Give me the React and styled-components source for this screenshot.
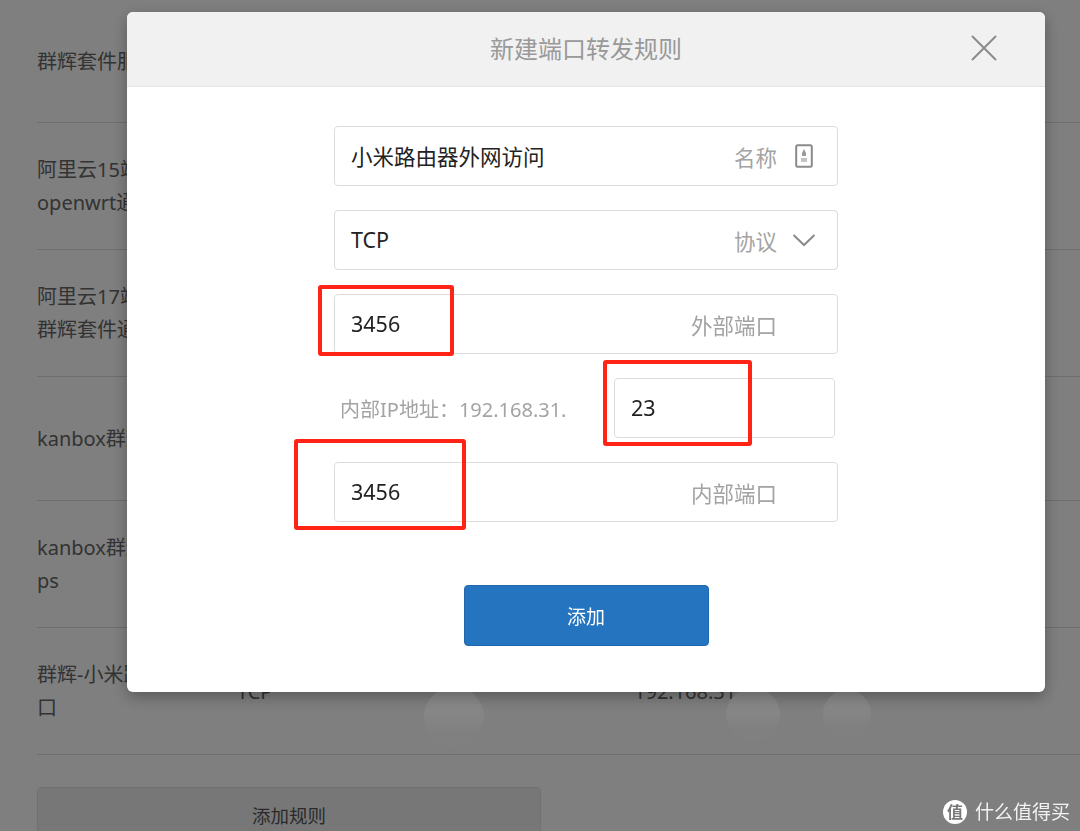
import React from "react";
import styled, { createGlobalStyle } from "styled-components";

const GlobalStyle = createGlobalStyle`
  html, body {
    margin: 0;
    height: 100%;
    overflow: hidden;
    background: #fff;
    font-family: "Noto Sans", "Noto Sans CJK SC", sans-serif;
  }
`;

const rules = [
  { height: 123, lines: ["群辉套件服务外网访问"] },
  { height: 127, lines: ["阿里云15端口转发", "openwrt通道"] },
  { height: 127, lines: ["阿里云17端口转发", "群辉套件通道"] },
  { height: 124, lines: ["kanbox群辉访问"] },
  { height: 127, lines: ["kanbox群辉访问", "ps"] },
  {
    height: 127,
    lines: ["群辉-小米路由器端", "口"],
    protocol: "TCP",
    ip: "192.168.31.98",
    port: "98",
  },
];

const App = () => (
  <>
    <GlobalStyle />
    <Page>
      {rules.map((rule) => (
        <RuleRow key={rule.lines[0] + rule.height + rule.lines.length} $height={rule.height}>
          <RuleName>
            {rule.lines.map((line) => (
              <div key={line}>{line}</div>
            ))}
          </RuleName>
          <RuleCell>{rule.protocol}</RuleCell>
          <RuleCell />
          <RuleCell>{rule.ip}</RuleCell>
        </RuleRow>
      ))}
      <AddRuleButton>添加规则</AddRuleButton>
    </Page>

    <Backdrop>
      <Dome $left={424} $top={687} $width={60} />
      <Dome $left={726} $top={688} $width={54} />
      <Dome $left={823} $top={690} $width={48} />

      <Modal>
        <ModalHeader>
          <ModalTitle>新建端口转发规则</ModalTitle>
          <CloseButton aria-label="关闭">
            <svg width="28" height="28" viewBox="0 0 28 28">
              <path d="M2 2 L26 26 M26 2 L2 26" stroke="#8a8a8a" strokeWidth="2" fill="none" />
            </svg>
          </CloseButton>
        </ModalHeader>

        <ModalBody>
          <Field>
            <FieldValue>小米路由器外网访问</FieldValue>
            <FieldLabel>名称</FieldLabel>
            <IconSlot>
              <svg width="18" height="24" viewBox="0 0 18 24">
                <rect x="1.2" y="1.2" width="15.6" height="21.6" rx="1.5" fill="#fff" stroke="#8a8a8a" strokeWidth="2" />
                <path d="M9 5 L11 9 L11 12 L7 12 L7 9 Z" fill="#9a9a9a" />
                <rect x="6" y="14" width="6" height="4" fill="#c4c4c4" />
              </svg>
            </IconSlot>
          </Field>

          <Field>
            <FieldValue>TCP</FieldValue>
            <FieldLabel>协议</FieldLabel>
            <IconSlot>
              <svg width="24" height="14" viewBox="0 0 24 14">
                <path d="M1.5 2 L12 12 L22.5 2" stroke="#8a8a8a" strokeWidth="2" fill="none" />
              </svg>
            </IconSlot>
          </Field>

          <Field>
            <FieldValue>3456</FieldValue>
            <FieldLabel $wide>外部端口</FieldLabel>
          </Field>

          <IpRow>
            <IpPrefix>内部IP地址：192.168.31.</IpPrefix>
            <IpField>
              <FieldValue>23</FieldValue>
            </IpField>
          </IpRow>

          <Field>
            <FieldValue>3456</FieldValue>
            <FieldLabel $wide>内部端口</FieldLabel>
          </Field>

          <SubmitButton>添加</SubmitButton>
        </ModalBody>

        <Mark $left={191} $top={273} $width={136} $height={71} />
        <Mark $left={476} $top={348} $width={149} $height={86} />
        <Mark $left={167} $top={427} $width={172} $height={91} />
      </Modal>

      <Watermark>
        <WatermarkBadge>值</WatermarkBadge>
        什么值得买
      </Watermark>
    </Backdrop>
  </>
);

const Page = styled.div`
  height: 831px;
  padding: 0 0 0 37px;
  box-sizing: border-box;
  overflow: hidden;
  color: #666;
  font-size: 20px;
  line-height: 33px;
`;

const RuleRow = styled.div`
  display: grid;
  grid-template-columns: 200px 197px 200px 1fr;
  align-items: center;
  box-sizing: border-box;
  height: ${({ $height }) => $height}px;
  border-bottom: 1px solid #ddd;
`;

const RuleName = styled.div`
  white-space: nowrap;
  overflow: hidden;
`;

const RuleCell = styled.div`
  white-space: nowrap;
`;

const AddRuleButton = styled.button`
  display: block;
  width: 504px;
  height: 60px;
  margin-top: 32px;
  padding: 0 0 4px;
  background: #efefef;
  border: 1px solid #e2e2e2;
  border-radius: 4px;
  color: #555;
  font: inherit;
  font-size: 18.5px;
`;

const Backdrop = styled.div`
  position: fixed;
  inset: 0;
  background: rgba(0, 0, 0, 0.5);
  padding: 12px 35px 0 127px;
  overflow: hidden;
`;

const Dome = styled.div`
  position: absolute;
  left: ${({ $left }) => $left}px;
  top: ${({ $top }) => $top}px;
  width: ${({ $width }) => $width}px;
  height: ${({ $width }) => $width}px;
  border-radius: 50%;
  background: linear-gradient(#8f8f8f 0%, #888 35%, #808080 75%);
`;

const Modal = styled.div`
  position: relative;
  width: 918px;
  height: 680px;
  background: #fff;
  border-radius: 6px;
  box-shadow: 0 5px 15px rgba(0, 0, 0, 0.3);
`;

const ModalHeader = styled.div`
  position: relative;
  display: flex;
  align-items: center;
  justify-content: center;
  box-sizing: border-box;
  height: 75px;
  background: #f1f1f1;
  border-bottom: 1px solid #e4e4e4;
  border-radius: 6px 6px 0 0;
`;

const ModalTitle = styled.div`
  color: #999;
  font-size: 24px;
  line-height: 1;
  margin-bottom: 0;
`;

const CloseButton = styled.button`
  position: absolute;
  right: 47px;
  top: 22px;
  display: flex;
  padding: 0;
  border: 0;
  background: none;
`;

const ModalBody = styled.div`
  display: flex;
  flex-direction: column;
  align-items: center;
  gap: 24px;
  padding-top: 39px;
`;

const Field = styled.div`
  display: flex;
  align-items: center;
  box-sizing: border-box;
  width: 504px;
  height: 60px;
  padding: 0 21px 0 16px;
  background: #fff;
  border: 1px solid #dcdcdc;
  border-radius: 4px;
`;

const FieldValue = styled.div`
  flex: 1;
  color: #222;
  font-size: 21.5px;
  padding-bottom: 2px;
`;

const FieldLabel = styled.div`
  color: #a3a3a3;
  font-size: 21.5px;
  margin-right: ${({ $wide }) => ($wide ? "39px" : "0")};
`;

const IconSlot = styled.div`
  display: flex;
  justify-content: center;
  width: 24px;
  margin-left: 15px;
`;

const IpRow = styled.div`
  display: flex;
  align-items: center;
  box-sizing: border-box;
  width: 504px;
  height: 60px;
  padding: 0 3px 0 6px;
`;

const IpPrefix = styled.div`
  flex: 1;
  color: #a3a3a3;
  font-size: 20px;
  white-space: nowrap;
`;

const IpField = styled(Field)`
  width: 221px;
`;

const SubmitButton = styled.button`
  width: 245px;
  height: 61px;
  margin-top: 39px;
  background: #2474c0;
  border: 1px solid #2067ab;
  border-radius: 4px;
  color: #fff;
  font: inherit;
  font-size: 19px;
`;

const Mark = styled.div`
  position: absolute;
  left: ${({ $left }) => $left}px;
  top: ${({ $top }) => $top}px;
  width: ${({ $width }) => $width}px;
  height: ${({ $height }) => $height}px;
  box-sizing: border-box;
  border: 4px solid #ff2415;
  border-radius: 3px;
`;

const Watermark = styled.div`
  position: absolute;
  right: 10px;
  bottom: 7px;
  display: flex;
  align-items: center;
  gap: 8px;
  color: #f2f2f2;
  font-size: 19px;
  line-height: 24px;
`;

const WatermarkBadge = styled.span`
  display: flex;
  align-items: center;
  justify-content: center;
  width: 24px;
  height: 24px;
  border-radius: 50%;
  background: #fff;
  color: #777;
  font-size: 16px;
  font-weight: 700;
`;

export default App;
